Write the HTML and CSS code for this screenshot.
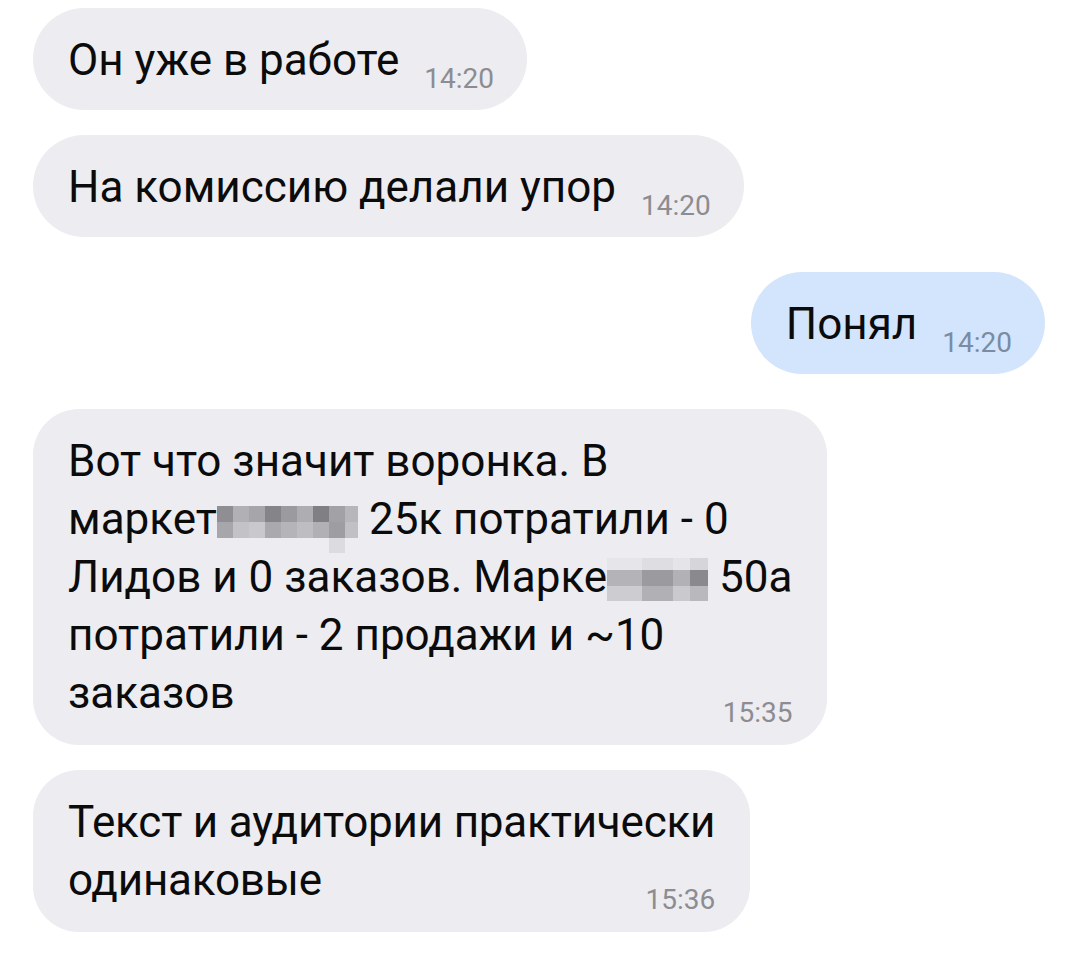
FILE: index.html
```html
<!DOCTYPE html>
<html lang="ru">
<head>
<meta charset="utf-8">
<title>Чат</title>
<link rel="stylesheet" href="styles.css">
</head>
<body>
<div class="chat">
  <div class="bubble in single">
    <span class="text">Он уже в работе</span>
    <span class="time">14:20</span>
  </div>
  <div class="bubble in single gap-s">
    <span class="text">На комиссию делали упор</span>
    <span class="time">14:20</span>
  </div>
  <div class="bubble out single gap-l">
    <span class="text">Понял</span>
    <span class="time">14:20</span>
  </div>
  <div class="bubble in multi gap-l">
    <div class="text">Вот что значит воронка. В<br>маркет<span class="mosaic m1"><span class="tiles"><i style="background:#8f8f93"></i><i style="background:#b1b1b5"></i><i style="background:#a6a6aa"></i><i style="background:#858589"></i><i style="background:#9b9b9f"></i><i style="background:#aeaeb2"></i><i style="background:#808084"></i><i style="background:#a2a2a6"></i><i style="background:#b7b7bb"></i><i style="background:#a7a7ab"></i><i style="background:#c3c3c7"></i><i style="background:#c9c9cd"></i><i style="background:#aaaaae"></i><i style="background:#b5b5b9"></i><i style="background:#bebec2"></i><i style="background:#b1b1b5"></i><i style="background:#9e9ea2"></i><i style="background:#c1c1c5"></i><i></i><i></i><i></i><i></i><i></i><i></i><i></i><i style="background:#dcdce0"></i><i></i></span></span> 25к потратили - 0<br>Лидов и 0 заказов. Марке<span class="mosaic m2"><span class="tiles"><i style="background:#e6e6ea"></i><i style="background:#dedee2"></i><i style="background:#e5e5e9"></i><i style="background:#d6d6da"></i><i style="background:#b4b4b8"></i><i style="background:#9b9b9f"></i><i style="background:#b2b2b6"></i><i style="background:#8a8a8e"></i><i style="background:#cdcdd1"></i><i style="background:#b1b1b5"></i><i style="background:#cacace"></i><i style="background:#b9b9bd"></i></span></span> 50а<br>потратили - 2 продажи и ~10<br>заказов</div>
    <span class="time">15:35</span>
  </div>
  <div class="bubble in multi gap-s">
    <div class="text tight">Текст и аудитории практически<br>одинаковые</div>
    <span class="time">15:36</span>
  </div>
</div>
</body>
</html>
```
FILE: styles.css
```css
html, body {
  margin: 0;
  padding: 0;
  background: #ffffff;
}

.chat {
  display: flex;
  flex-direction: column;
  align-items: flex-start;
  padding: 8px 35px 0 33px;
  font-family: Roboto, "Noto Sans", sans-serif;
}

.bubble {
  display: flex;
  background: #ececf1;
  color: #0b0b0b;
  font-size: 44px;
}

.bubble.single {
  flex-direction: row;
  align-items: flex-end;
  padding: 23px 33px 17px 35px;
  border-radius: 51px;
}

.bubble.multi {
  flex-direction: column;
  padding: 23px 35px 18px 35px;
  border-radius: 46px;
}

.bubble.out {
  align-self: flex-end;
  background: #d2e5fd;
}

.gap-s { margin-top: 25px; }
.gap-l { margin-top: 35px; }

.text {
  line-height: 58px;
  white-space: nowrap;
}

.text.tight {
  letter-spacing: -0.2px;
}

.single .text {
  margin-bottom: 4px;
}

.time {
  font-size: 28px;
  line-height: 28px;
  color: #8c8c91;
}

.single .time {
  margin-left: 25px;
}

.multi .time {
  align-self: flex-end;
  margin-top: -23px;
}

.out .time {
  color: #7a8ca3;
}

.mosaic {
  display: inline-block;
  overflow: hidden;
  vertical-align: baseline;
}

.tiles {
  display: grid;
}

.tiles i {
  display: block;
}

.m1 {
  height: 47px;
  margin-bottom: -19px;
}

.m1 .tiles {
  grid-template-columns: 16px 16px 16px 16px 16px 16px 16px 16px 13px;
  grid-template-rows: 16px 16px 15px;
}

.m2 {
  height: 43px;
  margin-bottom: -9px;
}

.m2 .tiles {
  grid-template-columns: 35px 31px 17px 18px;
  grid-template-rows: 12px 16px 15px;
}
```
